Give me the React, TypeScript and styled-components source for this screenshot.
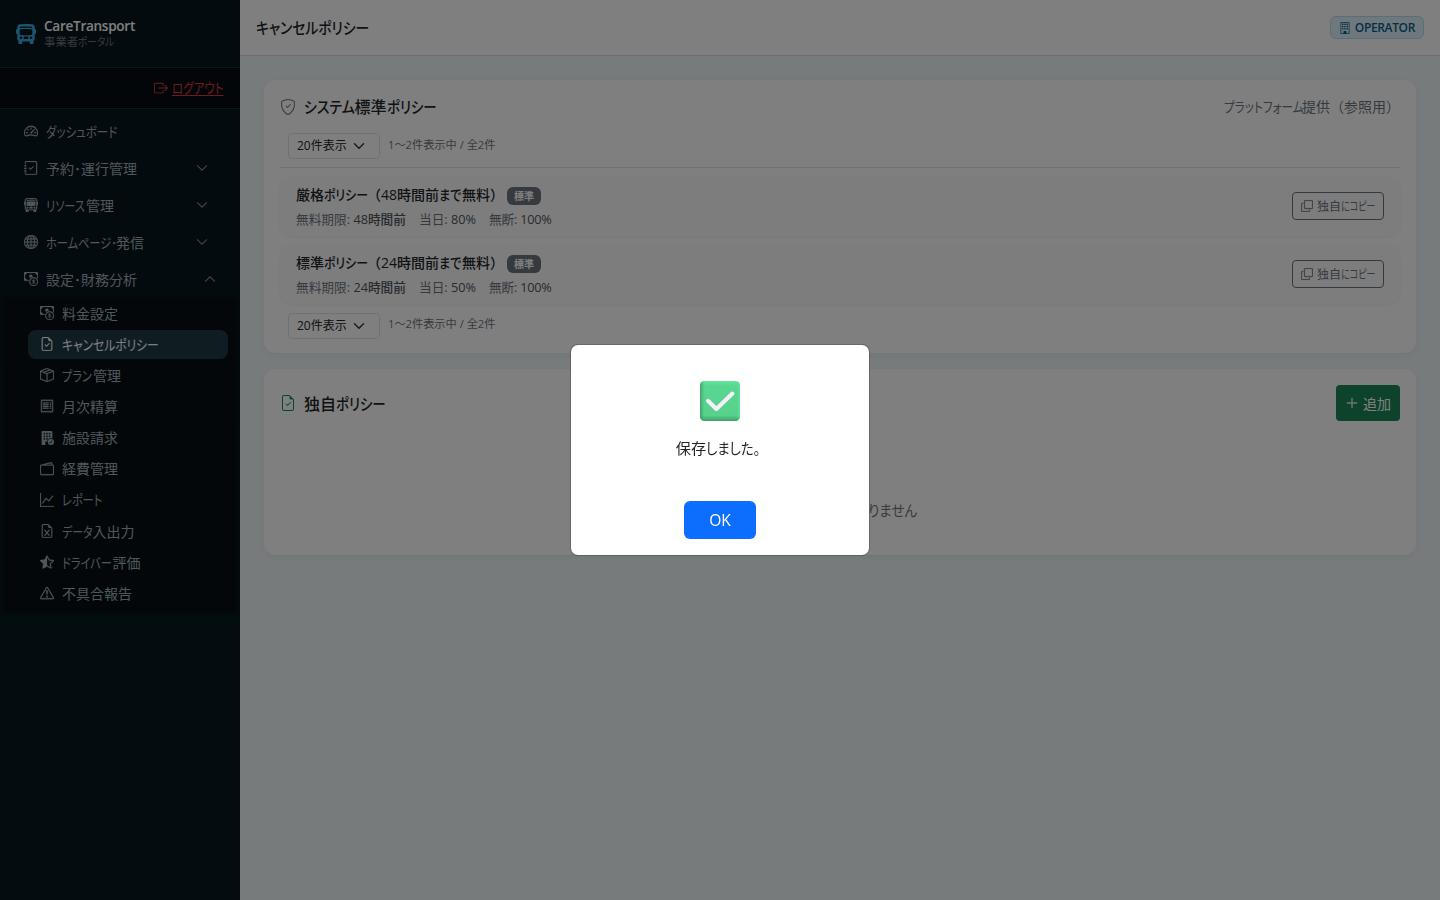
import React from "react";
import styled, { createGlobalStyle, css } from "styled-components";
import {
  BsBusFront, BsBusFrontFill, BsBoxArrowRight, BsSpeedometer2, BsJournalCheck, BsGlobe, BsCashCoin,
  BsFileEarmarkCheck, BsBoxSeam, BsReceipt, BsBuildingFillCheck, BsWallet2, BsGraphUp, BsFileEarmarkExcel,
  BsStarHalf, BsExclamationTriangle, BsShieldCheck, BsCopy, BsBuilding, BsPlusLg, BsChevronDown, BsChevronUp,
} from "react-icons/bs";

const GlobalStyle = createGlobalStyle`
  * { box-sizing: border-box; }
  body {
    margin: 0;
    font-family: "Open Sans", "Noto Sans CJK JP", sans-serif;
    font-size: 16px;
    line-height: 1.5;
    color: #212529;
    overflow: hidden;
  }
  svg { display: block; flex: none; }
  button { font: inherit; }
`;

const Text = styled.span<{ $ls?: number }>`
  white-space: nowrap;
  letter-spacing: ${(p) => p.$ls ?? 0}px;
`;

/* Condensed kana run: $w is the advance width, $s the horizontal scale of its glyphs. */
const Kana = styled.span<{ $w: number; $s?: number }>`
  display: inline-block;
  width: ${(p) => p.$w}px;
  white-space: nowrap;
  text-align: left;
  font-feature-settings: "palt";
  transform: scaleX(${(p) => p.$s ?? 0.82});
  transform-origin: 0 50%;
`;

const Shell = styled.div`
  display: flex;
  height: 900px;
  background: #eff7f9;
`;

const Sidebar = styled.aside`
  width: 240px;
  flex: none;
  background: linear-gradient(180deg, #06161c 0%, #07191f 100%);
  color: #9db0b7;
`;

const Brand = styled.div`
  height: 68px;
  display: flex;
  align-items: center;
  gap: 8px;
  padding: 0 16px 1px;
  border-bottom: 1px solid #1b2d36;
  svg { color: #38a8dc; margin-top: 2px; }
`;

const BrandText = styled.div`
  display: flex;
  flex-direction: column;
`;

const BrandName = styled(Text)`
  color: #fff;
  font-weight: 600;
  font-size: 13.6px;
  line-height: 17px;
`;

const BrandSub = styled(Text)`
  color: #6c757d;
  font-size: 11.4px;
  line-height: 16px;
`;

const Logout = styled.div`
  height: 41px;
  display: flex;
  align-items: center;
  justify-content: flex-end;
  gap: 4px;
  padding: 0 16px 1px;
  background: #040d12;
  border-bottom: 1px solid #1b2d36;
  color: #dc3545;
  font-size: 14px;
  ${Kana} { text-decoration: underline; text-underline-offset: 2px; }
`;

const Nav = styled.nav`
  padding: 3.5px 8px;
  svg { stroke: currentColor; stroke-width: 0.25; }
`;

const NavItem = styled.div<{ $open?: boolean }>`
  height: 37.1px;
  display: flex;
  align-items: center;
  padding: 0 ${(p) => (p.$open ? 16 : 24)}px 0 16px;
  font-size: 14px;
  ${Text} { flex: 1; margin-left: 8px; }
`;

const SubNav = styled.div`
  margin: 0 -4px;
  padding: 0.5px 8px 4px 24px;
  display: flex;
  flex-direction: column;
  gap: 2px;
  background: #070f15;
  box-shadow: 0 0 4px #070f15;
`;

const SubItem = styled.div<{ $active?: boolean }>`
  height: 29.15px;
  display: flex;
  align-items: center;
  gap: 8px;
  padding-left: 12px;
  border-radius: 8px;
  font-size: 14px;
  ${(p) => p.$active && css`
    background: #1f3a46;
    color: #fff;
  `}
`;

const Main = styled.main`
  flex: 1;
  min-width: 0;
`;

const Header = styled.header`
  height: 56px;
  display: flex;
  align-items: center;
  justify-content: space-between;
  padding: 0 16px;
  background: #fff;
  border-bottom: 1px solid #cfdde2;
`;

const PageTitle = styled(Text)`
  font-weight: 500;
  font-size: 16px;
`;

const RoleBadge = styled.div`
  height: 23px;
  display: flex;
  align-items: center;
  gap: 4px;
  padding: 0 8px;
  border: 1px solid #b3dcf2;
  border-radius: 6px;
  background: #def0fa;
  color: #0a5f8c;
  font-size: 12px;
  font-weight: 600;
`;

const Content = styled.div`
  padding: 24px;
  display: flex;
  flex-direction: column;
  gap: 16px;
`;

const Card = styled.section<{ $h: number }>`
  height: ${(p) => p.$h}px;
  padding: 16px;
  border-radius: 12px;
  background: #fff;
  box-shadow: 0 2px 8px rgba(10, 50, 70, 0.06);
`;

const CardHead = styled.div<{ $h: number; $color: string }>`
  height: ${(p) => p.$h}px;
  display: flex;
  align-items: center;
  gap: 8px;
  svg { color: ${(p) => p.$color}; }
`;

const CardTitle = styled(Text)`
  flex: 1;
  padding-top: 1px;
  font-size: 16px;
  font-weight: 500;
`;

const CardNote = styled(Text)`
  color: #6c757d;
  font-size: 14px;
`;

const Pager = styled.div<{ $top?: boolean }>`
  display: flex;
  align-items: center;
  gap: 8px;
  height: ${(p) => (p.$top ? 51 : 42)}px;
  padding: ${(p) => (p.$top ? 8 : 1)}px 8px 0;
  ${(p) => p.$top && css`border-bottom: 1px solid #dee2e6;`}
`;

const Select = styled.div`
  width: 92px;
  height: 26px;
  display: flex;
  align-items: center;
  gap: 6px;
  padding: 0 8px;
  border: 1px solid #dee2e6;
  border-radius: 4px;
  font-size: 12px;
`;

const Range = styled(Text)`
  margin-top: -2px;
  font-feature-settings: "palt";
  color: #6c757d;
  font-size: 11.2px;
`;

const Policies = styled.div`
  padding-top: 8px;
  display: flex;
  flex-direction: column;
  gap: 8px;
`;

const Policy = styled.div`
  height: 60px;
  display: flex;
  align-items: center;
  justify-content: space-between;
  padding: 0 16px;
  border-radius: 12px;
  background: #fafafa;
  box-shadow: 0 1px 4px rgba(0, 0, 0, 0.06);
`;

const PolicyName = styled.div`
  height: 24px;
  display: flex;
  align-items: center;
  gap: 3px;
  font-size: 14px;
  font-weight: 500;
`;

const Tag = styled.span`
  width: 34px;
  height: 18px;
  margin-top: 3px;
  display: grid;
  place-items: center;
  border-radius: 6px;
  background: #6c757d;
  color: #fff;
  font-size: 10px;
  font-weight: 700;
`;

const Terms = styled.div`
  height: 24px;
  margin-top: 1px;
  display: flex;
  align-items: center;
  gap: 13px;
  color: #6c757d;
  font-size: 12.7px;
  b { font-weight: 500; color: #4e565e; }
`;

const PolicyInfo = styled.div`
  padding-top: 2px;
`;

const CopyButton = styled.button`
  width: 92px;
  height: 28px;
  display: flex;
  align-items: center;
  gap: 4px;
  padding: 0 8px;
  border: 1px solid #6c757d;
  border-radius: 4px;
  background: transparent;
  color: #6c757d;
  font-size: 12px;
  svg { stroke: currentColor; stroke-width: 0.3; }
  ${Text} { padding-top: 2px; }
`;

const AddButton = styled.button`
  width: 64px;
  height: 36px;
  display: flex;
  align-items: center;
  gap: 4px;
  padding: 0 9px;
  border: 0;
  border-radius: 4px;
  background: #198754;
  color: #fff;
  font-size: 14px;
  ${CardHead} & svg { color: #fff; stroke: #fff; stroke-width: 0.3; }
`;

const Empty = styled.div`
  padding-top: 79px;
  text-align: center;
  color: #6c757d;
  font-size: 14.4px;
`;

const Backdrop = styled.div`
  position: fixed;
  inset: 0;
  display: grid;
  place-items: center;
  background: rgba(0, 0, 0, 0.5);
`;

const Dialog = styled.div`
  width: 300px;
  height: 212px;
  display: flex;
  flex-direction: column;
  align-items: center;
  padding: 36px 16px 0;
  border: 1px solid rgba(0, 0, 0, 0.175);
  border-radius: 8px;
  background: #fff;
  background-clip: padding-box;
`;

const Message = styled(Text)`
  height: 24px;
  margin-top: 16px;
  font-size: 15.2px;
`;

const OkButton = styled.button`
  width: 72px;
  height: 38px;
  margin-top: 40px;
  padding-top: 2px;
  border: 0;
  border-radius: 6px;
  background: #0d6efd;
  color: #fff;
  font-size: 15.6px;
  font-weight: 500;
`;

const CheckMark = () => (
  <svg width="40" height="40" viewBox="0 0 40 40">
    <defs>
      <linearGradient id="face" x1="0" y1="0" x2="0" y2="1">
        <stop offset="0" stopColor="#62e59a" />
        <stop offset=".12" stopColor="#59d68f" />
        <stop offset=".86" stopColor="#57d28c" />
        <stop offset="1" stopColor="#3f9f6c" />
      </linearGradient>
      <linearGradient id="side" x1="0" y1="0" x2="1" y2="0">
        <stop offset="0" stopColor="#3b9466" stopOpacity=".85" />
        <stop offset=".12" stopColor="#4cb87c" stopOpacity="0" />
        <stop offset=".93" stopColor="#62e59a" stopOpacity="0" />
        <stop offset="1" stopColor="#62e59a" stopOpacity=".7" />
      </linearGradient>
    </defs>
    <rect width="40" height="40" rx="4.5" fill="url(#face)" />
    <rect width="40" height="40" rx="4.5" fill="url(#side)" />
    <path d="M8 19.800l8.400 8.200L32.400 12.500" fill="none" stroke="#f6effa" strokeWidth="4" strokeLinecap="round" strokeLinejoin="round" />
  </svg>
);

const sections = [
  { id: "dashboard", icon: BsSpeedometer2, label: <Kana $w={72}>ダッシュボード</Kana> },
  { id: "booking", icon: BsJournalCheck, label: "予約･運行管理", arrow: true },
  { id: "resource", icon: BsBusFront, label: <><Kana $w={40} $s={0.8}>リソース</Kana>管理</>, arrow: true },
  { id: "site", icon: BsGlobe, label: <><Kana $w={70} $s={0.8}>ホームページ･</Kana>発信</>, arrow: true },
  { id: "finance", icon: BsCashCoin, label: "設定･財務分析", arrow: true, open: true },
];

const pages = [
  { id: "fare", icon: BsCashCoin, label: "料金設定" },
  { id: "cancel", icon: BsFileEarmarkCheck, label: <Kana $w={97} $s={0.84}>キャンセルポリシー</Kana>, active: true },
  { id: "plan", icon: BsBoxSeam, label: <><Kana $w={31} $s={0.8}>プラン</Kana>管理</> },
  { id: "monthly", icon: BsReceipt, label: "月次精算" },
  { id: "facility", icon: BsBuildingFillCheck, label: "施設請求" },
  { id: "expense", icon: BsWallet2, label: "経費管理" },
  { id: "report", icon: BsGraphUp, label: <Kana $w={41} $s={0.8}>レポート</Kana> },
  { id: "data", icon: BsFileEarmarkExcel, label: <><Kana $w={30.5} $s={0.78}>データ</Kana>入出力</> },
  { id: "driver", icon: BsStarHalf, label: <><Kana $w={50.5} $s={0.8}>ドライバー</Kana>評価</> },
  { id: "bug", icon: BsExclamationTriangle, label: "不具合報告" },
];

const policies = [
  { kind: "厳格", limit: "48時間前", hours: "48", day: "80%" },
  { kind: "標準", limit: "24時間前", hours: "24", day: "50%" },
];

const PageSize = ({ top }: { top?: boolean }) => (
  <Pager $top={top}>
    <Select>
      <Text>20件表示</Text>
      <svg width="12" height="12" viewBox="0 0 16 16" fill="none" stroke="#343a40" strokeWidth="2" strokeLinecap="round" strokeLinejoin="round">
        <path d="m2 5 6 6 6-6" />
      </svg>
    </Select>
    <Range>1～2件表示中 / 全2件</Range>
  </Pager>
);

export default function App() {
  return (
    <>
      <GlobalStyle />
      <Shell>
        <Sidebar>
          <Brand>
            <BsBusFrontFill size={20} />
            <BrandText>
              <BrandName $ls={-0.3}>CareTransport</BrandName>
              <BrandSub>事業者<Kana $w={36} $s={0.85}>ポータル</Kana></BrandSub>
            </BrandText>
          </Brand>
          <Logout>
            <BsBoxArrowRight size={14} />
            <Kana $w={52}>ログアウト</Kana>
          </Logout>
          <Nav>
            {sections.map(({ id, icon: Icon, label, arrow, open }) => (
              <NavItem key={id} $open={open}>
                <Icon size={14} />
                <Text>{label}</Text>
                {arrow && (open ? <BsChevronUp size={12} /> : <BsChevronDown size={12} />)}
              </NavItem>
            ))}
            <SubNav>
              {pages.map(({ id, icon: Icon, label, active }) => (
                <SubItem key={id} $active={active}>
                  <Icon size={14} />
                  <Text>{label}</Text>
                </SubItem>
              ))}
            </SubNav>
          </Nav>
        </Sidebar>
        <Main>
          <Header>
            <PageTitle><Kana $w={113} $s={0.86}>キャンセルポリシー</Kana></PageTitle>
            <RoleBadge>
              <BsBuilding size={12} />
              <Text $ls={-0.35}>OPERATOR</Text>
            </RoleBadge>
          </Header>
          <Content>
            <Card $h={273}>
              <CardHead $h={21} $color="#6c757d">
                <BsShieldCheck size={16} />
                <CardTitle>
                  <Kana $w={50.5} $s={0.87}>システム</Kana>標準<Kana $w={49} $s={0.84}>ポリシー</Kana>
                </CardTitle>
                <CardNote><Kana $w={78} $s={0.83}>プラットフォーム</Kana>提供（参照用）</CardNote>
              </CardHead>
              <PageSize top />
              <Policies>
                {policies.map((p) => (
                  <Policy key={p.kind}>
                    <PolicyInfo>
                      <PolicyName>
                        <Text>
                          {p.kind}<Kana $w={43} $s={0.85}>ポリシー</Kana>（{p.hours}時間前<Kana $w={23} $s={0.86}>まで</Kana>無料）
                        </Text>
                        <Tag>標準</Tag>
                      </PolicyName>
                      <Terms>
                        <Text>無料期限: <b>{p.limit}</b></Text>
                        <Text>当日: <b>{p.day}</b></Text>
                        <Text $ls={-0.2}>無断: <b>100%</b></Text>
                      </Terms>
                    </PolicyInfo>
                    <CopyButton>
                      <BsCopy size={12} />
                      <Text>独自<Kana $w={34} $s={0.75}>にコピー</Kana></Text>
                    </CopyButton>
                  </Policy>
                ))}
              </Policies>
              <PageSize />
            </Card>
            <Card $h={186}>
              <CardHead $h={36} $color="#198754">
                <BsFileEarmarkCheck size={16} />
                <CardTitle>独自<Kana $w={49} $s={0.84}>ポリシー</Kana></CardTitle>
                <AddButton>
                  <BsPlusLg size={14} />
                  <Text>追加</Text>
                </AddButton>
              </CardHead>
              <Empty>
                <Text>独自<Kana $w={77}>ポリシーはあ</Kana><Kana $w={49} $s={0.94}>りません</Kana></Text>
              </Empty>
            </Card>
          </Content>
        </Main>
      </Shell>
      <Backdrop>
        <Dialog>
          <CheckMark />
          <Message>保存<Kana $w={58} $s={0.88}>しました。</Kana></Message>
          <OkButton>OK</OkButton>
        </Dialog>
      </Backdrop>
    </>
  );
}
